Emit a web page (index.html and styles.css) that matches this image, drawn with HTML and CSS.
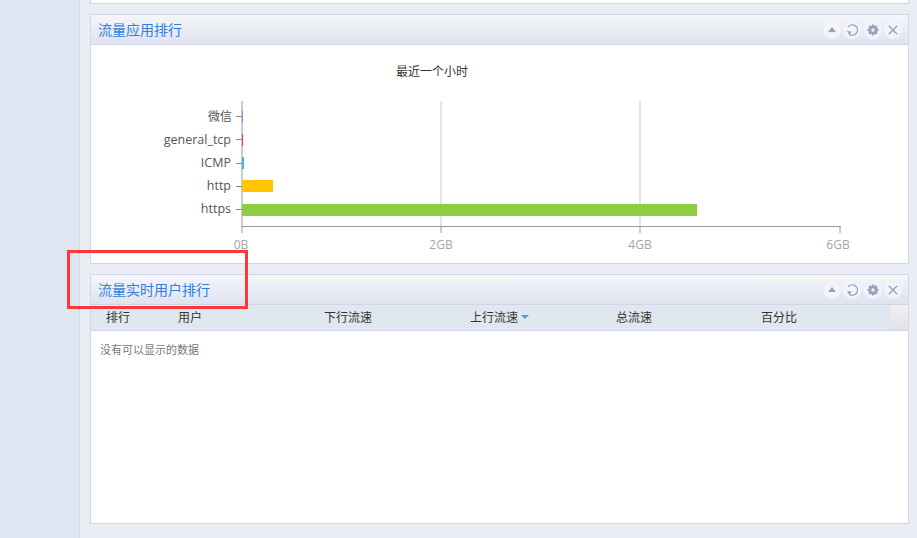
FILE: index.html
```html
<!DOCTYPE html>
<html lang="zh">
<head>
<meta charset="utf-8">
<title>流量排行</title>
<link rel="stylesheet" href="styles.css">
</head>
<body>
<aside class="sidebar"></aside>
<main class="main">
  <div class="stub"></div>
  <section class="panel">
    <header class="panel-head">
      <h2 class="panel-title">流量应用排行</h2>
      <div class="tools">
        <span class="tool"><svg viewBox="0 0 18 18"><path class="solid" d="M9 6 13 11H5z"/></svg></span>
        <span class="tool"><svg viewBox="0 0 18 18"><path class="line" d="M5.200 5.800A5.200 5.200 0 1 1 6.500 13.500"/><path class="solid" d="M4 10 8.500 10.500 6.500 14.500z"/></svg></span>
        <span class="tool"><svg viewBox="0 0 18 18"><path class="line gear" d="M9 3.500V14.500M3.500 9H14.500M5.100 5.100 12.900 12.900M12.900 5.100 5.100 12.900"/><circle class="ring" cx="9" cy="9" r="3"/></svg></span>
        <span class="tool"><svg viewBox="0 0 18 18"><path class="line" d="M4.800 4.800 13.200 13.200M13.200 4.800 4.800 13.200"/></svg></span>
      </div>
    </header>
    <div class="chart-body">
      <svg class="chart" viewBox="0 0 817 218" width="817" height="218">
        <text class="chart-title" x="305" y="31">最近一个小时</text>
        <path class="grid-lines" d="M350 56V181M549 56V181"/>
        <path class="y-axis" d="M151 56V188M350 181V188M549 181V188M749 181V188"/>
        <path class="x-axis" d="M151 181.500H750"/>
        <path class="ticks" d="M145 71.500H151M145 94.500H151M145 118.500H151M145 141.500H151M145 164.500H151"/>
        <g class="cat-labels">
          <text class="cjk-label" x="141" y="76">微信</text>
          <text x="140" y="99">general_tcp</text>
          <text x="140" y="122">ICMP</text>
          <text x="140" y="145">http</text>
          <text x="140" y="168">https</text>
        </g>
        <rect class="bar-wx" x="151" y="66" width="1" height="12"/>
        <rect class="bar-tcp" x="151" y="89" width="1" height="12"/>
        <rect class="bar-icmp" x="151" y="112" width="2" height="12"/>
        <rect class="bar-http" x="151" y="135" width="31" height="12"/>
        <rect class="bar-https" x="151" y="159" width="455" height="12"/>
        <g class="val-labels">
          <text x="150" y="204">0B</text>
          <text x="350" y="204">2GB</text>
          <text x="549" y="204">4GB</text>
          <text x="747" y="204">6GB</text>
        </g>
      </svg>
    </div>
  </section>
  <section class="panel">
    <header class="panel-head">
      <h2 class="panel-title">流量实时用户排行</h2>
      <div class="tools">
        <span class="tool"><svg viewBox="0 0 18 18"><path class="solid" d="M9 6 13 11H5z"/></svg></span>
        <span class="tool"><svg viewBox="0 0 18 18"><path class="line" d="M5.200 5.800A5.200 5.200 0 1 1 6.500 13.500"/><path class="solid" d="M4 10 8.500 10.500 6.500 14.500z"/></svg></span>
        <span class="tool"><svg viewBox="0 0 18 18"><path class="line gear" d="M9 3.500V14.500M3.500 9H14.500M5.100 5.100 12.900 12.900M12.900 5.100 5.100 12.900"/><circle class="ring" cx="9" cy="9" r="3"/></svg></span>
        <span class="tool"><svg viewBox="0 0 18 18"><path class="line" d="M4.800 4.800 13.200 13.200M13.200 4.800 4.800 13.200"/></svg></span>
      </div>
    </header>
    <div class="grid-head">
      <div class="cols">
        <span class="col col-rank">排行</span>
        <span class="col">用户</span>
        <span class="col">下行流速</span>
        <span class="col">上行流速<i class="sort"></i></span>
        <span class="col col-total">总流速</span>
        <span class="col col-last">百分比</span>
      </div>
      <div class="corner"></div>
    </div>
    <p class="empty">没有可以显示的数据</p>
  </section>
</main>
<div class="highlight"></div>
</body>
</html>
```
FILE: styles.css
```css
* { box-sizing: border-box; }
html, body { height: 100%; margin: 0; }
body {
  display: flex;
  height: 538px;
  overflow: hidden;
  background: #ebedf4;
  font-family: "Noto Sans CJK SC", "Open Sans", sans-serif;
  color: #333;
}
.sidebar {
  width: 80px;
  flex: none;
  background: #dfe5f1;
  border-right: 1px solid #d5d9e6;
}
.main {
  flex: 1;
  min-width: 0;
  padding: 0 8px 0 10px;
  display: flex;
  flex-direction: column;
  gap: 10px;
}
.stub {
  height: 4px;
  background: #fff;
  border: 1px solid #d1d6ea;
  border-top: 0;
}
.panel {
  height: 250px;
  flex: none;
  background: #fff;
  border: 1px solid #d1d6ea;
  display: flex;
  flex-direction: column;
}
.panel-head {
  height: 30px;
  flex: none;
  display: flex;
  align-items: center;
  justify-content: space-between;
  padding: 0 6px 0 7px;
  background: linear-gradient(#f5f6fa, #dfe3ef);
  border-bottom: 1px solid #cfd5ea;
}
.panel-title {
  margin: 0;
  font-size: 14px;
  font-weight: 400;
  color: #2f7fdb;
  line-height: 26px;
  height: 28px;
}
.tools { display: flex; gap: 2.5px; }
.tool {
  width: 18px;
  height: 18px;
  border-radius: 50%;
  background: #f3f4f9;
  display: block;
}
.tool svg { display: block; width: 18px; height: 18px; }
.solid { fill: #9ba1bd; }
.line { fill: none; stroke: #9ba1bd; stroke-width: 1.400; }
.gear { stroke-width: 2.400; }
.ring { fill: #f3f4f9; stroke: #9ba1bd; stroke-width: 2.600; }
.chart-body { flex: 1; }
.chart { display: block; }
.chart text { font-family: "Open Sans", "Noto Sans CJK SC", sans-serif; font-size: 12px; }
.chart-title { fill: #333; }
.grid-lines { fill: none; stroke: #e4e4e4; stroke-width: 2; }
.y-axis { fill: none; stroke: #ccc; stroke-width: 2; }
.x-axis { fill: none; stroke: #999; stroke-width: 1; }
.ticks { fill: none; stroke: #888; stroke-width: 1; }
.chart .cat-labels text { fill: #555; text-anchor: end; font-size: 12.500px; }
.chart .cat-labels .cjk-label { font-size: 12px; }
.val-labels text { fill: #a5a5a5; text-anchor: middle; }
.bar-wx { fill: #9a7fe0; }
.bar-tcp { fill: #f33b3b; }
.bar-icmp { fill: #2ebde8; }
.bar-http { fill: #ffc600; }
.bar-https { fill: #8ccd42; }
.grid-head {
  height: 26px;
  flex: none;
  display: flex;
  background: #e1e7ef;
  border-bottom: 1px solid #d1d6ea;
}
.cols { flex: 1; min-width: 0; display: flex; align-items: center; padding-bottom: 2px; font-size: 12px; color: #333; }
.col { width: 146px; flex: none; display: flex; align-items: center; }
.col-rank { width: 87px; padding-left: 15px; }
.col-total { width: 145px; }
.col-last { width: 130px; }
.sort {
  display: block;
  width: 0;
  height: 0;
  margin-left: 3px;
  border: 4px solid transparent;
  border-top: 4px solid #5b96e0;
  border-bottom: 0;
}
.corner {
  width: 17px;
  flex: none;
  background: linear-gradient(#f1f1f1, #e2e2e2);
}
.empty {
  margin: 0;
  padding: 10px 9px;
  font-size: 11px;
  line-height: 17px;
  color: #777;
}
.highlight {
  position: absolute;
  left: 67px;
  top: 250px;
  width: 181px;
  height: 59px;
  border: 3px solid #f93a3a;
}
```
